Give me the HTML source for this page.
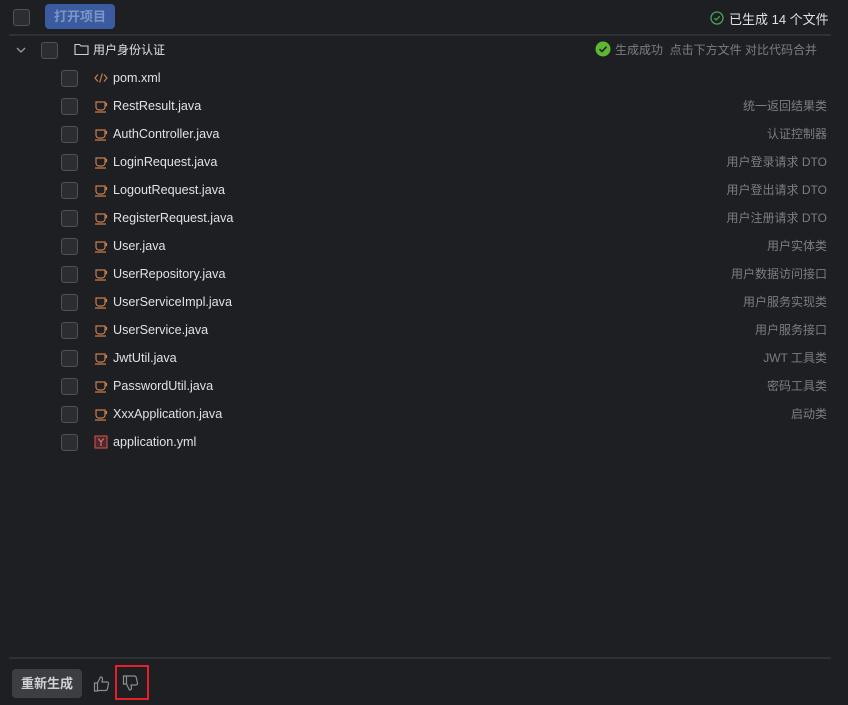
<!DOCTYPE html>
<html><head><meta charset="utf-8"><style>
body{margin:0;width:848px;height:705px;background:#1e1f22;font-family:"Liberation Sans","Noto Sans CJK SC",sans-serif;color:#dfe1e5;position:relative;overflow:hidden;font-size:13px}
.a{position:absolute}
.cb{position:absolute;width:15px;height:15px;border:1px solid #4e5157;border-radius:3px;background:#2b2d30}
.row{position:absolute;left:0;width:848px;height:28px}
.row .cb{left:61px;top:6px}
.row .ic{position:absolute;left:94px;top:7px;width:14px;height:14px}
.row .n{position:absolute;left:113px;top:7px;font-size:12.6px;color:#dfe1e5}
.row .d{position:absolute;right:21px;top:5px;font-size:12px;color:#7a7e85}
</style></head><body>
<div class="cb" style="left:13px;top:9px"></div>
<div class="a" style="left:45px;top:4px;width:70px;height:25px;background:#3a5b9f;border-radius:4px;color:#7d95c6;font-size:13px;font-weight:bold;line-height:25px;text-align:center">打开项目</div>
<svg class="a" style="left:710px;top:11px" width="14" height="14" viewBox="0 0 14 14"><circle cx="7" cy="7" r="6" fill="none" stroke="#4aa356" stroke-width="1.3"/><path d="M4.3 7.2 6.2 9 9.7 5.3" fill="none" stroke="#4aa356" stroke-width="1.3"/></svg>
<div class="a" style="left:729px;top:9px;font-size:13px;color:#dfe1e5">已生成 14 个文件</div>
<div class="a" style="left:9px;top:34px;width:822px;height:2px;background:#2e3034"></div>
<svg class="a" style="left:15px;top:45px" width="12" height="10" viewBox="0 0 12 10"><path d="M2 3 6 7 10 3" fill="none" stroke="#9a9da3" stroke-width="1.3"/></svg>
<div class="cb" style="left:41px;top:42px"></div>
<svg class="a" style="left:74px;top:42px" width="15" height="14" viewBox="0 0 15 14"><path d="M1 2.5h4.5l1.5 1.5h7v8.5h-13z" fill="none" stroke="#ced0d6" stroke-width="1.1"/></svg>
<div class="a" style="left:93px;top:41px;font-size:12px;color:#dfe1e5">用户身份认证</div>
<svg class="a" style="left:595px;top:41px" width="16" height="16" viewBox="0 0 16 16"><circle cx="8" cy="8" r="7.5" fill="#5fb832"/><path d="M4.5 8.2 7 10.5 11.5 5.7" fill="none" stroke="#1e1f22" stroke-width="1.6"/></svg>
<div class="a" style="left:615px;top:41px;font-size:12px;color:#7a7e85">生成成功&nbsp;&nbsp;点击下方文件 对比代码合并</div>

<div class="row" style="top:64px"><div class="cb"></div><svg class="ic" viewBox="0 0 14 14"><path d="M4 3.5 1 7l3 3.5M10 3.5 13 7l-3 3.5M8.3 2.5 5.7 11.5" fill="none" stroke="#c77d4d" stroke-width="1.2"/></svg><div class="n">pom.xml</div></div>
<div class="row" style="top:92px"><div class="cb"></div><svg class="ic" viewBox="0 0 14 14"><path d="M2 3h9v5a3 3 0 0 1-3 3H5a3 3 0 0 1-3-3zM11 4.5h1.5v2H11M1 13h11" fill="none" stroke="#c77d4d" stroke-width="1.2"/></svg><div class="n">RestResult.java</div><div class="d">统一返回结果类</div></div>
<div class="row" style="top:120px"><div class="cb"></div><svg class="ic" viewBox="0 0 14 14"><path d="M2 3h9v5a3 3 0 0 1-3 3H5a3 3 0 0 1-3-3zM11 4.5h1.5v2H11M1 13h11" fill="none" stroke="#c77d4d" stroke-width="1.2"/></svg><div class="n">AuthController.java</div><div class="d">认证控制器</div></div>
<div class="row" style="top:148px"><div class="cb"></div><svg class="ic" viewBox="0 0 14 14"><path d="M2 3h9v5a3 3 0 0 1-3 3H5a3 3 0 0 1-3-3zM11 4.5h1.5v2H11M1 13h11" fill="none" stroke="#c77d4d" stroke-width="1.2"/></svg><div class="n">LoginRequest.java</div><div class="d">用户登录请求 DTO</div></div>
<div class="row" style="top:176px"><div class="cb"></div><svg class="ic" viewBox="0 0 14 14"><path d="M2 3h9v5a3 3 0 0 1-3 3H5a3 3 0 0 1-3-3zM11 4.5h1.5v2H11M1 13h11" fill="none" stroke="#c77d4d" stroke-width="1.2"/></svg><div class="n">LogoutRequest.java</div><div class="d">用户登出请求 DTO</div></div>
<div class="row" style="top:204px"><div class="cb"></div><svg class="ic" viewBox="0 0 14 14"><path d="M2 3h9v5a3 3 0 0 1-3 3H5a3 3 0 0 1-3-3zM11 4.5h1.5v2H11M1 13h11" fill="none" stroke="#c77d4d" stroke-width="1.2"/></svg><div class="n">RegisterRequest.java</div><div class="d">用户注册请求 DTO</div></div>
<div class="row" style="top:232px"><div class="cb"></div><svg class="ic" viewBox="0 0 14 14"><path d="M2 3h9v5a3 3 0 0 1-3 3H5a3 3 0 0 1-3-3zM11 4.5h1.5v2H11M1 13h11" fill="none" stroke="#c77d4d" stroke-width="1.2"/></svg><div class="n">User.java</div><div class="d">用户实体类</div></div>
<div class="row" style="top:260px"><div class="cb"></div><svg class="ic" viewBox="0 0 14 14"><path d="M2 3h9v5a3 3 0 0 1-3 3H5a3 3 0 0 1-3-3zM11 4.5h1.5v2H11M1 13h11" fill="none" stroke="#c77d4d" stroke-width="1.2"/></svg><div class="n">UserRepository.java</div><div class="d">用户数据访问接口</div></div>
<div class="row" style="top:288px"><div class="cb"></div><svg class="ic" viewBox="0 0 14 14"><path d="M2 3h9v5a3 3 0 0 1-3 3H5a3 3 0 0 1-3-3zM11 4.5h1.5v2H11M1 13h11" fill="none" stroke="#c77d4d" stroke-width="1.2"/></svg><div class="n">UserServiceImpl.java</div><div class="d">用户服务实现类</div></div>
<div class="row" style="top:316px"><div class="cb"></div><svg class="ic" viewBox="0 0 14 14"><path d="M2 3h9v5a3 3 0 0 1-3 3H5a3 3 0 0 1-3-3zM11 4.5h1.5v2H11M1 13h11" fill="none" stroke="#c77d4d" stroke-width="1.2"/></svg><div class="n">UserService.java</div><div class="d">用户服务接口</div></div>
<div class="row" style="top:344px"><div class="cb"></div><svg class="ic" viewBox="0 0 14 14"><path d="M2 3h9v5a3 3 0 0 1-3 3H5a3 3 0 0 1-3-3zM11 4.5h1.5v2H11M1 13h11" fill="none" stroke="#c77d4d" stroke-width="1.2"/></svg><div class="n">JwtUtil.java</div><div class="d">JWT 工具类</div></div>
<div class="row" style="top:372px"><div class="cb"></div><svg class="ic" viewBox="0 0 14 14"><path d="M2 3h9v5a3 3 0 0 1-3 3H5a3 3 0 0 1-3-3zM11 4.5h1.5v2H11M1 13h11" fill="none" stroke="#c77d4d" stroke-width="1.2"/></svg><div class="n">PasswordUtil.java</div><div class="d">密码工具类</div></div>
<div class="row" style="top:400px"><div class="cb"></div><svg class="ic" viewBox="0 0 14 14"><path d="M2 3h9v5a3 3 0 0 1-3 3H5a3 3 0 0 1-3-3zM11 4.5h1.5v2H11M1 13h11" fill="none" stroke="#c77d4d" stroke-width="1.2"/></svg><div class="n">XxxApplication.java</div><div class="d">启动类</div></div>
<div class="row" style="top:428px"><div class="cb"></div><svg class="ic" viewBox="0 0 14 14"><rect x="1" y="1" width="12" height="12" fill="#4a2a2c" stroke="#d9534f" stroke-width="1"/><path d="M4.3 3.5 7 7l2.7-3.5M7 7v4" fill="none" stroke="#e06c6c" stroke-width="1.2"/></svg><div class="n">application.yml</div></div>

<div class="a" style="left:9px;top:657px;width:822px;height:2px;background:#2e3034"></div>
<div class="a" style="left:12px;top:669px;width:70px;height:29px;background:#3d3e42;border-radius:4px;color:#cfd1d5;font-size:13px;font-weight:bold;line-height:29px;text-align:center">重新生成</div>
<svg class="a" style="left:93px;top:675px" width="18" height="18" viewBox="0 0 18 18"><path d="M1.5 8h3v8h-3zM4.5 8l3-6c1.5 0 2 1 2 2l-.5 3h5c1 0 1.7.8 1.5 1.8l-1.2 5.5c-.2.8-.8 1.2-1.6 1.2H4.5" fill="none" stroke="#8a8d93" stroke-width="1.2"/></svg>
<div class="a" style="left:115px;top:665px;width:30px;height:31px;border:2px solid #e5202a"></div>
<svg class="a" style="left:122px;top:674px" width="18" height="18" viewBox="0 0 18 18"><path d="M1.5 2h3v8h-3zM4.5 10l3 6c1.5 0 2-1 2-2l-.5-3h5c1 0 1.7-.8 1.5-1.8l-1.2-5.5C14.1 2.9 13.5 2 12.7 2H4.5" fill="none" stroke="#8a8d93" stroke-width="1.2"/></svg>
</body></html>
